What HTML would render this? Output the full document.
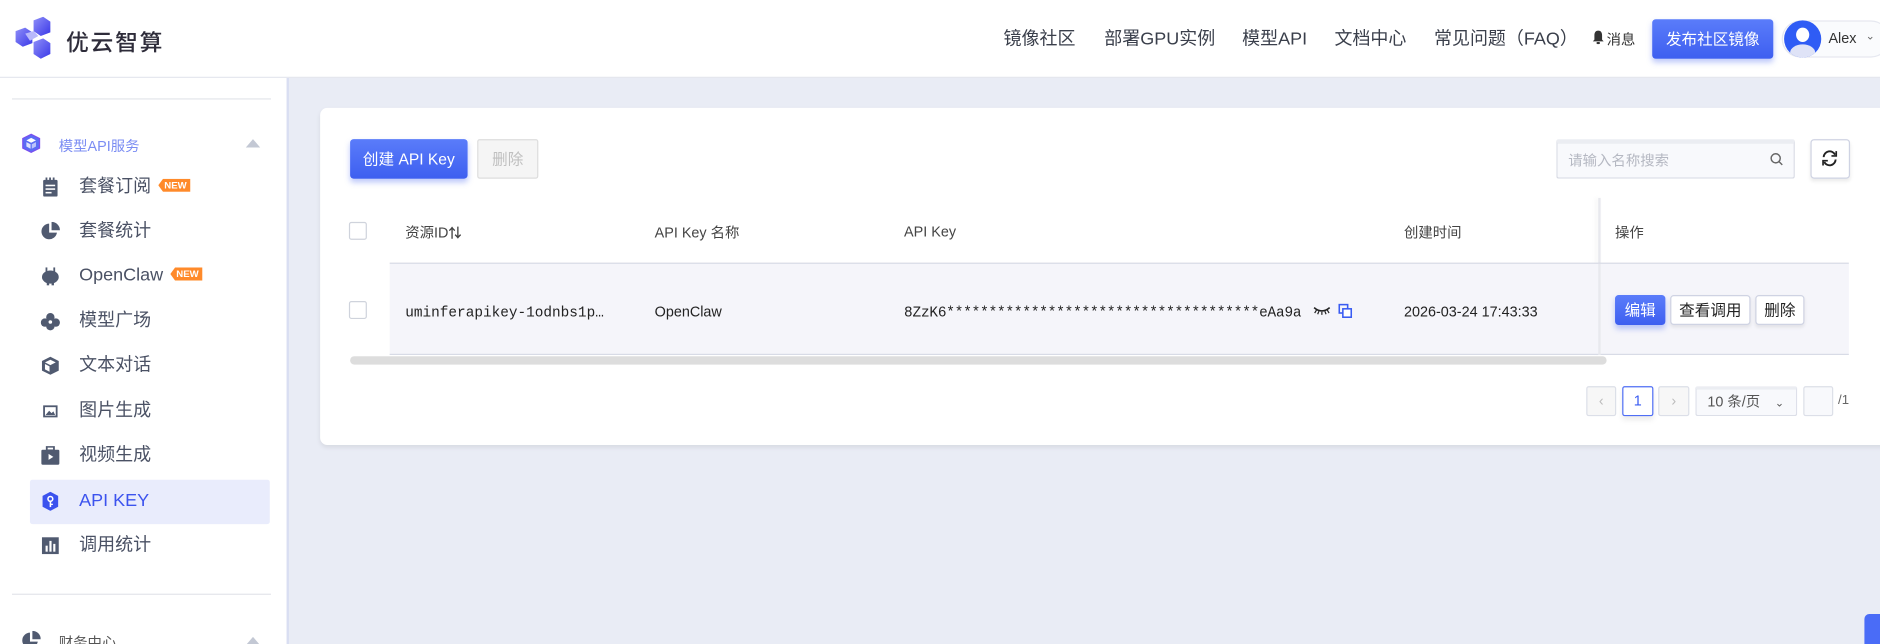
<!DOCTYPE html>
<html><head><meta charset="utf-8"><style>
*{box-sizing:border-box;margin:0;padding:0}
html,body{width:1880px;height:644px;overflow:hidden;background:#e9ecf5}
#w{width:1568px;height:537px;transform:scale(1.19898,1.1993);transform-origin:0 0;position:relative;font-family:"Liberation Sans","Noto Sans CJK SC",sans-serif;color:#333;background:#e9ecf5}
.a{position:absolute;white-space:nowrap}
.hdr{left:0;top:0;width:1568px;height:65px;background:#fff;border-bottom:1px solid #e4e6ee}
.nav{top:21px;font-size:15px;color:#3a3f4b}
.side{left:0;top:65px;width:241px;height:472px;background:#fff;border-right:2px solid #d9def2}
.it{left:66px;font-size:15px;color:#4a5164;line-height:20px}
.ic{left:34px;width:16px;height:16px}
.new{display:inline-block;margin-left:6px;background:#ff8a2a;color:#fff;font-size:8px;font-weight:bold;padding:1px 3px 1px 5px;line-height:9px;vertical-align:3px;clip-path:polygon(4px 0,100% 0,100% 100%,4px 100%,0 50%)}
.card{left:267px;top:90px;width:1320px;height:281px;background:#fff;border-radius:6px;box-shadow:0 2px 4px rgba(0,0,0,.08)}
.btnb{background:linear-gradient(#5a7cfa,#3e5ff0);color:#fff;border-radius:3px;box-shadow:0 3px 5px rgba(70,100,240,.35);text-align:center}
.btnw{background:#fff;border:1px solid #cfd3e3;border-radius:3px;text-align:center;box-shadow:0 2px 3px rgba(0,0,0,.08);font-size:13px;color:#222}
.th{top:185px;font-size:12px;color:#444}
.mono{font-family:"Liberation Mono","DejaVu Sans Mono",monospace;font-size:12px;color:#222}
.cb{width:15px;height:15px;border:1px solid #cfd3dc;border-radius:2px;background:#fff}
.pg{top:322px;height:25px;border:1px solid #dcdfe8;border-radius:2px;font-size:12px;text-align:center;line-height:23px;color:#bbb;background:#fff}
</style></head><body><div id="w">
<div class="a hdr"></div>
<svg class="a" style="left:11px;top:14px" width="32" height="38" viewBox="0 0 32 38">
<defs><linearGradient id="g" x1="0" y1="0" x2="1" y2="1"><stop offset="0" stop-color="#8f8ff8"/><stop offset="1" stop-color="#3a38e8"/></linearGradient></defs>
<polygon points="17,3 25,0 31,4 31,13 23,16 17,12" fill="url(#g)"/>
<polygon points="2,12 10,9 16,13 16,22 8,25 2,21" fill="url(#g)"/>
<polygon points="17,21 25,18 31,22 31,31 23,35 17,31" fill="url(#g)"/>
<polygon points="10,14 17,12 21,16 14,20" fill="#b8b8fb"/>
</svg>
<div class="a" style="left:55px;top:21px;font-size:19px;letter-spacing:1.5px;color:#2e2c3a;font-weight:500">优云智算</div>
<div class="a nav" style="left:837px">镜像社区</div>
<div class="a nav" style="left:921px">部署GPU实例</div>
<div class="a nav" style="left:1036px">模型API</div>
<div class="a nav" style="left:1113px">文档中心</div>
<div class="a nav" style="left:1196px">常见问题（FAQ）</div>
<svg class="a" style="left:1328px;top:25px" width="10" height="12" viewBox="0 0 10 12"><path d="M5 0.5C2.5 0.5 1.8 2.5 1.8 4.5V8L0.5 9.5H9.5L8.2 8V4.5C8.2 2.5 7.5 0.5 5 0.5z" fill="#333"/><rect x="3.5" y="10" width="3" height="1.8" rx="0.9" fill="#333"/></svg>
<div class="a" style="left:1340px;top:24px;font-size:12px;color:#333">消息</div>
<div class="a btnb" style="left:1378px;top:16px;width:101px;height:33px;line-height:33px;font-size:13px">发布社区镜像</div>
<div class="a" style="left:1486px;top:17px;width:90px;height:31px;border:1px solid #e6e8f0;border-radius:16px;background:#fafbfd"></div>
<div class="a" style="left:1488px;top:17px;width:31px;height:31px;border-radius:50%;background:#2f5cf5;overflow:hidden"><div class="a" style="left:10px;top:6px;width:11px;height:12px;border-radius:50%;background:#fff"></div><div class="a" style="left:5px;top:20px;width:21px;height:14px;border-radius:50%;background:#dfe3f7"></div></div>
<div class="a" style="left:1525px;top:25px;font-size:12px;color:#333">Alex</div>
<div class="a" style="left:1556px;top:25px;font-size:9px;color:#666">⌄</div>

<div class="a side"></div>
<div class="a" style="left:10px;top:82px;width:216px;height:1px;background:#e3e5ea"></div>
<svg class="a" style="left:18px;top:111px" width="16" height="17" viewBox="0 0 16 17"><polygon points="8,1 15,4.5 15,12.5 8,16 1,12.5 1,4.5" fill="#5b6cf4" stroke="#7a4ff0"/><polygon points="8,4 12,6 8,8 4,6" fill="#fff"/><polygon points="4,7.5 7.5,9.3 7.5,13 4,11.2" fill="#fff" opacity=".8"/><polygon points="8.5,9.3 12,7.5 12,11.2 8.5,13" fill="#fff" opacity=".6"/></svg>
<div class="a" style="left:49px;top:113px;font-size:12px;color:#7b8df3">模型API服务</div>
<div class="a" style="left:205px;top:116px;width:0;height:0;border-left:6px solid transparent;border-right:6px solid transparent;border-bottom:7px solid #c3c8d4"></div>

<svg class="a ic" style="top:148px" viewBox="0 0 16 16"><rect x="2" y="2" width="12" height="14" rx="1" fill="#505a70"/><rect x="4" y="0" width="1.5" height="3" fill="#505a70"/><rect x="7" y="0" width="1.5" height="3" fill="#505a70"/><rect x="10" y="0" width="1.5" height="3" fill="#505a70"/><rect x="4" y="6" width="8" height="1.3" fill="#fff"/><rect x="4" y="9" width="8" height="1.3" fill="#fff"/><rect x="4" y="12" width="5" height="1.3" fill="#fff"/></svg>
<div class="a it" style="top:146px">套餐订阅<span class="new">NEW</span></div>
<svg class="a ic" style="top:185px" viewBox="0 0 16 16"><path d="M7 1.5A6.5 6.5 0 1 0 13.5 9H7z" fill="#505a70"/><path d="M9 0v7h7A7 7 0 0 0 9 0z" fill="#505a70"/></svg>
<div class="a it" style="top:183px">套餐统计</div>
<svg class="a ic" style="top:222px" viewBox="0 0 16 16"><ellipse cx="8" cy="9" rx="7" ry="5.5" fill="#505a70"/><rect x="4" y="1" width="1.5" height="4" fill="#505a70"/><rect x="10.5" y="1" width="1.5" height="4" fill="#505a70"/><rect x="5" y="13" width="2" height="3" fill="#505a70"/><rect x="9" y="13" width="2" height="3" fill="#505a70"/></svg>
<div class="a it" style="top:220px">OpenClaw<span class="new">NEW</span></div>
<svg class="a ic" style="top:260px" viewBox="0 0 16 16"><circle cx="8" cy="4.5" r="3.5" fill="#505a70"/><circle cx="3.5" cy="9" r="3.5" fill="#505a70"/><circle cx="12.5" cy="9" r="3.5" fill="#505a70"/><circle cx="8" cy="12" r="3.5" fill="#505a70"/><circle cx="8" cy="8.5" r="1.5" fill="#fff"/></svg>
<div class="a it" style="top:258px">模型广场</div>
<svg class="a ic" style="top:297px" viewBox="0 0 16 16"><polygon points="8,0.5 15,4 15,12 8,15.5 1,12 1,4" fill="#505a70"/><polygon points="8,3 12.5,5.2 8,7.4 3.5,5.2" fill="#fff"/><polygon points="3.5,6.5 7.3,8.5 7.3,13 3.5,11" fill="#fff"/></svg>
<div class="a it" style="top:295px">文本对话</div>
<svg class="a ic" style="top:335px" viewBox="0 0 16 16"><rect x="2" y="3" width="12" height="10" fill="#505a70"/><rect x="3.5" y="4.5" width="9" height="7" fill="#fff"/><polygon points="4,11 7,7.5 9,9.5 10.5,8 12,11" fill="#505a70"/></svg>
<div class="a it" style="top:333px">图片生成</div>
<svg class="a ic" style="top:372px" viewBox="0 0 16 16"><rect x="5" y="0.5" width="6" height="3" fill="none" stroke="#505a70" stroke-width="1.5"/><rect x="0.5" y="3" width="15" height="12.5" rx="1" fill="#505a70"/><polygon points="6.5,6.5 10.5,9 6.5,11.5" fill="#fff"/></svg>
<div class="a it" style="top:370px">视频生成</div>
<div class="a" style="left:25px;top:400px;width:200px;height:37px;background:#e9ecfc;border-radius:2px"></div>
<svg class="a ic" style="top:410px" viewBox="0 0 16 16"><polygon points="8,0 14.5,3.5 14.5,12.5 8,16 1.5,12.5 1.5,3.5" fill="#3c53ee"/><circle cx="8" cy="6" r="2" fill="none" stroke="#fff" stroke-width="1.3"/><rect x="7.4" y="7.8" width="1.3" height="5" fill="#fff"/><rect x="8.5" y="10" width="1.6" height="1.1" fill="#fff"/></svg>
<div class="a it" style="top:408px;color:#3c53ee">API KEY</div>
<svg class="a ic" style="top:447px" viewBox="0 0 16 16"><rect x="1" y="1" width="14" height="14" fill="#505a70"/><rect x="4" y="8" width="1.8" height="5" fill="#fff"/><rect x="7.2" y="4" width="1.8" height="9" fill="#fff"/><rect x="10.4" y="6.5" width="1.8" height="6.5" fill="#fff"/></svg>
<div class="a it" style="top:445px">调用统计</div>
<div class="a" style="left:10px;top:495px;width:216px;height:1px;background:#e3e5ea"></div>
<svg class="a" style="left:18px;top:526px" width="16" height="16" viewBox="0 0 16 16"><path d="M7 1.5A6.5 6.5 0 1 0 13.5 9H7z" fill="#505a70"/><path d="M9 0v7h7A7 7 0 0 0 9 0z" fill="#505a70"/></svg>
<div class="a" style="left:49px;top:527px;font-size:12px;color:#555">财务中心</div>
<div class="a" style="left:205px;top:531px;width:0;height:0;border-left:6px solid transparent;border-right:6px solid transparent;border-bottom:7px solid #c3c8d4"></div>

<div class="a card"></div>
<div class="a btnb" style="left:292px;top:116px;width:98px;height:33px;line-height:33px;font-size:13px">创建 API Key</div>
<div class="a" style="left:398px;top:116px;width:51px;height:33px;line-height:31px;background:#f5f5f5;border:1px solid #ddd;border-radius:2px;font-size:13px;color:#c0c0c0;text-align:center">删除</div>
<div class="a" style="left:1298px;top:116px;width:199px;height:33px;border:1px solid #d6d9e3;border-top:4px solid #ebedf2;border-radius:2px;background:#f8f9fc"></div>
<div class="a" style="left:1308px;top:125px;font-size:12px;color:#b5b8c2">请输入名称搜索</div>
<svg class="a" style="left:1476px;top:127px" width="11" height="11" viewBox="0 0 11 11"><circle cx="5" cy="5" r="3.8" fill="none" stroke="#666" stroke-width="1.2"/><path d="M8 8l2.5 2.5" stroke="#666" stroke-width="1.2"/></svg>
<div class="a btnw" style="left:1510px;top:116px;width:33px;height:33px"></div>
<svg class="a" style="left:1518px;top:124px" width="16" height="16" viewBox="0 0 16 16"><path d="M3 7A5 5 0 0 1 12.5 5M13 9A5 5 0 0 1 3.5 11" fill="none" stroke="#222" stroke-width="1.6"/><path d="M13.5 2v4h-4" fill="none" stroke="#222" stroke-width="1.4"/><path d="M2.5 14v-4h4" fill="none" stroke="#222" stroke-width="1.4"/></svg>

<div class="a cb" style="left:291px;top:185px"></div>
<div class="a th" style="left:338px">资源ID<b style="font-size:11px">⇅</b></div>
<div class="a th" style="left:546px">API Key 名称</div>
<div class="a th" style="left:754px;top:186px">API Key</div>
<div class="a th" style="left:1171px">创建时间</div>
<div class="a th" style="left:1347px">操作</div>
<div class="a" style="left:1333px;top:165px;width:2px;height:131px;background:#e8e9ee;box-shadow:-2px 0 4px rgba(0,0,0,.06)"></div>
<div class="a" style="left:325px;top:219px;width:1217px;height:1px;background:#d3d6e2"></div>
<div class="a" style="left:325px;top:220px;width:1217px;height:76px;background:#f5f5fa;border-bottom:1px solid #d8dbe6"></div>
<div class="a" style="left:1333px;top:220px;width:2px;height:76px;background:#e8e9ee"></div>
<div class="a cb" style="left:291px;top:251px"></div>
<div class="a mono" style="left:338px;top:254px">uminferapikey-1odnbs1p…</div>
<div class="a" style="left:546px;top:253px;font-size:12px;color:#222">OpenClaw</div>
<div class="a mono" style="left:754px;top:254px;letter-spacing:-0.15px">8ZzK6*************************************eAa9a</div>
<svg class="a" style="left:1095px;top:255px" width="15" height="8" viewBox="0 0 15 8"><path d="M1 1.5Q7.5 7 14 1.5" fill="none" stroke="#222" stroke-width="1.3"/><path d="M3 3.5L1.5 6M7.5 5v2.5M12 3.5L13.5 6M5 4.5L4 7M10 4.5L11 7" stroke="#222" stroke-width="1"/></svg>
<svg class="a" style="left:1116px;top:253px" width="12" height="13" viewBox="0 0 12 13"><rect x="1" y="1" width="7" height="7" fill="none" stroke="#3a5cf2" stroke-width="1.3"/><rect x="4" y="4.5" width="7" height="7" fill="#fff" stroke="#3a5cf2" stroke-width="1.3"/></svg>
<div class="a" style="left:1171px;top:253px;font-size:12px;color:#222">2026-03-24 17:43:33</div>
<div class="a btnb" style="left:1347px;top:246px;width:42px;height:25px;line-height:25px;font-size:13px">编辑</div>
<div class="a btnw" style="left:1393px;top:246px;width:67px;height:25px;line-height:23px">查看调用</div>
<div class="a btnw" style="left:1464px;top:246px;width:41px;height:25px;line-height:23px">删除</div>
<div class="a" style="left:292px;top:297px;width:1048px;height:7px;background:#dddddd;border-radius:4px"></div>

<div class="a pg" style="left:1323px;width:25px;background:#f7f7f7">‹</div>
<div class="a pg" style="left:1353px;width:26px;border-color:#4f6ef5;color:#3a5cf2;box-shadow:0 3px 5px rgba(0,0,0,.08)">1</div>
<div class="a pg" style="left:1383px;width:26px;background:#f7f7f7">›</div>
<div class="a pg" style="left:1414px;width:85px;text-align:left;padding-left:9px;color:#555;background:#f8f9fc;border-top:3px solid #ebedf2;line-height:20px">10 条/页 <span style="margin-left:9px;font-size:9px">⌄</span></div>
<div class="a pg" style="left:1504px;width:25px;background:#f8f9fc"></div>
<div class="a" style="left:1533px;top:328px;font-size:11px;color:#666">/1</div>
<div class="a" style="left:1555px;top:512px;width:14px;height:26px;background:#4a6cf7;border-radius:4px 0 0 0"></div>
</div></body></html>
